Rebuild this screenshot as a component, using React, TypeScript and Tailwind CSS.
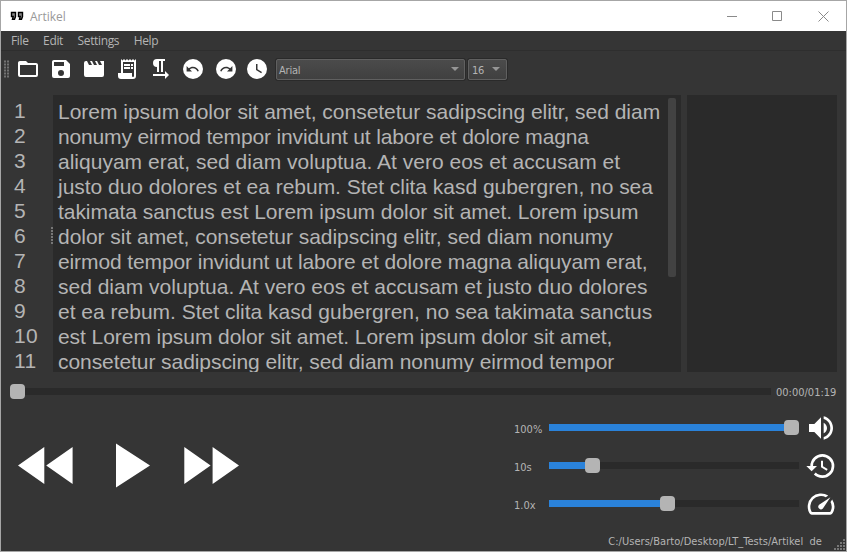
import React from "react";

const lines = [
  { text: "Lorem ipsum dolor sit amet, consetetur sadipscing elitr, sed diam", tracking: "tracking-[-0.02px]" },
  { text: "nonumy eirmod tempor invidunt ut labore et dolore magna", tracking: "tracking-[-0.155px]" },
  { text: "aliquyam erat, sed diam voluptua. At vero eos et accusam et", tracking: "tracking-[0.01px]" },
  { text: "justo duo dolores et ea rebum. Stet clita kasd gubergren, no sea", tracking: "tracking-[-0.025px]" },
  { text: "takimata sanctus est Lorem ipsum dolor sit amet. Lorem ipsum", tracking: "tracking-[-0.05px]" },
  { text: "dolor sit amet, consetetur sadipscing elitr, sed diam nonumy", tracking: "tracking-[-0.035px]" },
  { text: "eirmod tempor invidunt ut labore et dolore magna aliquyam erat,", tracking: "tracking-[-0.11px]" },
  { text: "sed diam voluptua. At vero eos et accusam et justo duo dolores", tracking: "tracking-normal" },
  { text: "et ea rebum. Stet clita kasd gubergren, no sea takimata sanctus", tracking: "tracking-normal" },
  { text: "est Lorem ipsum dolor sit amet. Lorem ipsum dolor sit amet,", tracking: "tracking-[-0.06px]" },
  { text: "consetetur sadipscing elitr, sed diam nonumy eirmod tempor", tracking: "tracking-[-0.07px]" },
];

const arrow =
  "M12.5 8C9.85 8 7.45 9 5.6 10.6L2 7V16H11L7.38 12.38C8.77 11.22 10.54 10.5 12.5 10.5C16.04 10.5 19.05 12.81 20.1 16L22.47 15.22C21.08 11.03 17.15 8 12.5 8Z";

function Icon({ children, size = "size-6" }: { children: React.ReactNode; size?: string }) {
  return (
    <svg viewBox="0 0 24 24" className={`${size} shrink-0 fill-white`}>
      {children}
    </svg>
  );
}

function Toolbar() {
  return (
    <div className="flex h-[36px] items-center pl-[3px]">
      <svg className="mr-[6px] h-[18px] w-[6px] shrink-0" viewBox="0 0 6 18">
        {[0, 3, 6, 9, 12, 15].map((y) => (
          <g key={y} fill="#727272">
            <rect x="0" y={y + 0.5} width="2" height="2" />
            <rect x="3" y={y + 0.5} width="2" height="2" />
          </g>
        ))}
      </svg>
      <div className="flex gap-[9px]">
        <Icon>
          <path d="M20 18H4V8H20M20 6H12L10 4H4C2.89 4 2 4.89 2 6V18A2 2 0 0 0 4 20H20A2 2 0 0 0 22 18V8C22 6.89 21.1 6 20 6Z" />
        </Icon>
        <Icon>
          <path d="M15 9H5V5H15M12 19A3 3 0 0 1 9 16A3 3 0 0 1 12 13A3 3 0 0 1 15 16A3 3 0 0 1 12 19M17 3H5C3.89 3 3 3.9 3 5V19A2 2 0 0 0 5 21H19A2 2 0 0 0 21 19V7L17 3Z" />
        </Icon>
        <Icon>
          <path d="M18 4L20 8H17L15 4H13L15 8H12L10 4H8L10 8H7L5 4H4A2 2 0 0 0 2 6V18A2 2 0 0 0 4 20H20A2 2 0 0 0 22 18V4H18Z" />
        </Icon>
        <Icon>
          <path d="M19.5 3.5L18 2L16.5 3.5L15 2L13.5 3.5L12 2L10.5 3.5L9 2L7.5 3.5L6 2V16H3V19A3 3 0 0 0 6 22H18A3 3 0 0 0 21 19V2L19.5 3.5M19 19A1 1 0 0 1 17 19V16H8V5H19V19M9 7H15V9H9V7M16 7H18V9H16V7M9 10H15V12H9V10M16 10H18V12H16V10Z" fillRule="evenodd" />
        </Icon>
        <Icon>
          <path d="M21 18L17 14V17H5V19H17V22M9 10V15H11V4H13V15H15V4H17V2H9A4 4 0 0 0 5 6A4 4 0 0 0 9 10Z" />
        </Icon>
        <Icon>
          <circle cx="12" cy="12" r="10" />
          <path d={arrow} className="fill-[#353535]" transform="translate(4.4 4.9) scale(.6)" />
        </Icon>
        <Icon>
          <circle cx="12" cy="12" r="10" />
          <path d={arrow} className="fill-[#353535]" transform="translate(19.6 4.9) scale(-.6 .6)" />
        </Icon>
      </div>
      <div className="ml-[7px]">
        <Icon>
          <path d="M12 2A10 10 0 0 0 2 12A10 10 0 0 0 12 22A10 10 0 0 0 22 12A10 10 0 0 0 12 2M16.2 16.2L11 13V7H12.5V12.2L17 14.9L16.2 16.2Z" />
        </Icon>
      </div>
      <Combo text="Arial" width="w-[189px] ml-[7px] pl-[2px] pr-[5px]" />
      <Combo text="16" width="w-[39px] ml-[3px] pl-[3px] pr-[6px]" />
    </div>
  );
}

function Combo({ text, width }: { text: string; width: string }) {
  return (
    <div
      className={`${width} flex h-[21px] items-center justify-between rounded-[2px] border border-[#606060] bg-linear-to-b from-[#4b4b4b] to-[#404040] shadow-[0_0_0_1px_#2a2a2a]`}
    >
      <span className="pt-[2px] text-[11px] leading-none tracking-[-0.2px]">{text}</span>
      <svg viewBox="0 0 8 4" className="h-[4px] w-[8px] fill-[#969696]">
        <path d="M0 0H8L4 4Z" />
      </svg>
    </div>
  );
}

function Control({ label, fill, children }: { label: string; fill: string; children: React.ReactNode }) {
  return (
    <div className="flex h-[38px] items-center">
      <span className="w-[35px] pt-[4px]">{label}</span>
      <div className="mb-px flex h-[15px] w-[250px] items-center">
        <div className={`${fill} h-[7px] shrink-0 bg-[#2a82da]`} />
        <div className="size-[15px] shrink-0 rounded-[4px] bg-[#b4b4b4]" />
        <div className="h-[7px] grow bg-[#2a2a2a]" />
      </div>
      <div className="ml-[6px]">
        <Icon size="size-8">{children}</Icon>
      </div>
    </div>
  );
}

export default function App() {
  return (
    <div className="flex h-[552px] w-[847px] flex-col overflow-hidden border border-[#a6a6a6] bg-[#353535] font-['DejaVu_Sans_Condensed','DejaVu_Sans',sans-serif] text-[11px] text-[#b4b4b4]">
      <header className="flex h-[30px] shrink-0 items-center bg-white pl-[9px] text-[#999999]">
        <svg viewBox="0 0 14 10" className="h-[10px] w-[14px] text-black">
          <path
            d="M1.5 1.5H5.5V5.5L4.5 8.2H2.5L3.2 5.5H1.5ZM8.5 1.5H12.5V5.5L11.5 8.2H9.5L10.2 5.5H8.5Z"
            className="fill-[#888] stroke-black stroke-[1.4]"
          />
        </svg>
        <span className="ml-[6px] pt-[2px] font-['Open_Sans',sans-serif] text-[12px]">Artikel</span>
        <svg viewBox="0 0 104 12" className="mr-[15px] mb-px ml-auto h-[12px] w-[104px] fill-none stroke-[#8a8a8a]">
          <path d="M0 6.5H10M45.5 1.5H54.5V10.5H45.5ZM91.5 1.5L101.5 11.5M101.5 1.5L91.5 11.5" />
        </svg>
      </header>
      <nav className="flex h-[20px] shrink-0 items-center gap-[14.5px] border-b border-[#2e2e2e] pl-[10px] font-['Open_Sans',sans-serif] text-[12px] tracking-[-0.35px]">
        <span>File</span>
        <span>Edit</span>
        <span>Settings</span>
        <span>Help</span>
      </nav>
      <Toolbar />
      <main className="mt-[8px] flex h-[277px] shrink-0 font-['Liberation_Sans',Arial,sans-serif] text-[21px] leading-[25px]">
        <div className="w-[50px] overflow-hidden pt-[3px] pl-[13px] tracking-[0.3px]">
          {lines.map((_, i) => (
            <div key={i}>{i + 1}</div>
          ))}
        </div>
        <div className="mt-[132px] h-[17px] w-[2px] bg-[repeating-linear-gradient(to_bottom,#777_0px,#777_2px,#353535_2px,#353535_3px)]" />
        <div className="flex w-[628px] overflow-hidden bg-[#2a2a2a] pt-[3px] pl-[5px]">
          <div className="w-[610px] whitespace-nowrap pt-px">
            {lines.map(({ text, tracking }) => (
              <div key={text} className={tracking}>
                {text}
              </div>
            ))}
          </div>
          <div className="h-[179px] w-[8px] rounded-[2px] bg-[#424242]" />
        </div>
        <div className="ml-[6px] w-[150px] bg-[#2a2a2a]" />
      </main>
      <div className="mt-[12px] flex h-[15px] shrink-0 items-center pl-[9px]">
        <div className="size-[15px] rounded-[4px] bg-[#b4b4b4]" />
        <div className="h-[7px] w-[746px] bg-[#2a2a2a]" />
        <span className="ml-[5px] pt-[4px]">00:00/01:19</span>
      </div>
      <div className="mt-[10px] flex h-[118px] shrink-0 justify-between pr-[9px]">
        <svg viewBox="0 0 222 45" className="mt-[34px] ml-[17px] h-[45px] w-[222px] fill-white">
          <path d="M0 22.5L26.3 4V41ZM28.2 22.5L54.6 4V41ZM98 .5L132 22.5L98 44.5ZM166.3 4L192.6 22.5L166.3 41ZM194.6 4L221 22.5L194.6 41Z" />
        </svg>
        <div>
          <Control label="100%" fill="w-[235px]">
            <path d="M14 3.23V5.29C16.89 6.15 19 8.83 19 12C19 15.17 16.89 17.84 14 18.7V20.77C18 19.86 21 16.28 21 12C21 7.72 18 4.14 14 3.23M16.5 12C16.5 10.23 15.5 8.71 14 7.97V16C15.5 15.29 16.5 13.76 16.5 12M3 9V15H7L12 20V4L7 9H3Z" />
          </Control>
          <Control label="10s" fill="w-[36px]">
            <path d="M13.5 8H12V13L16.28 15.54L17 14.33L13.5 12.25V8M13 3A9 9 0 0 0 4 12H1L4.96 16.03L9 12H6A7 7 0 0 1 13 5A7 7 0 0 1 20 12A7 7 0 0 1 13 19C11.07 19 9.32 18.21 8.06 16.94L6.64 18.36C8.27 20 10.5 21 13 21A9 9 0 0 0 22 12A9 9 0 0 0 13 3" />
          </Control>
          <Control label="1.0x" fill="w-[111px]">
            <path d="M20.38 8.57l-1.23 1.85a8 8 0 0 1-.22 7.58H5.07A8 8 0 0 1 15.58 6.85l1.85-1.23A10 10 0 0 0 3.35 19a2 2 0 0 0 1.72 1h13.85a2 2 0 0 0 1.74-1 10 10 0 0 0-.27-10.44zm-9.79 6.84a2 2 0 0 0 2.83 0l5.66-8.49-8.49 5.66a2 2 0 0 0 0 2.83z" />
          </Control>
        </div>
      </div>
      <footer className="flex grow items-end justify-end">
        <span className="mr-[12px] mb-px whitespace-pre tracking-[0.04px]">C:/Users/Barto/Desktop/LT_Tests/Artikel  de</span>
        <svg viewBox="0 0 12 12" className="size-[12px] fill-[#777]">
          <path d="M9 0h2v2h-2zM6 3h2v2h-2zM9 3h2v2h-2zM3 6h2v2h-2zM6 6h2v2h-2zM9 6h2v2h-2zM0 9h2v2h-2zM3 9h2v2h-2zM6 9h2v2h-2zM9 9h2v2h-2z" />
        </svg>
      </footer>
    </div>
  );
}
